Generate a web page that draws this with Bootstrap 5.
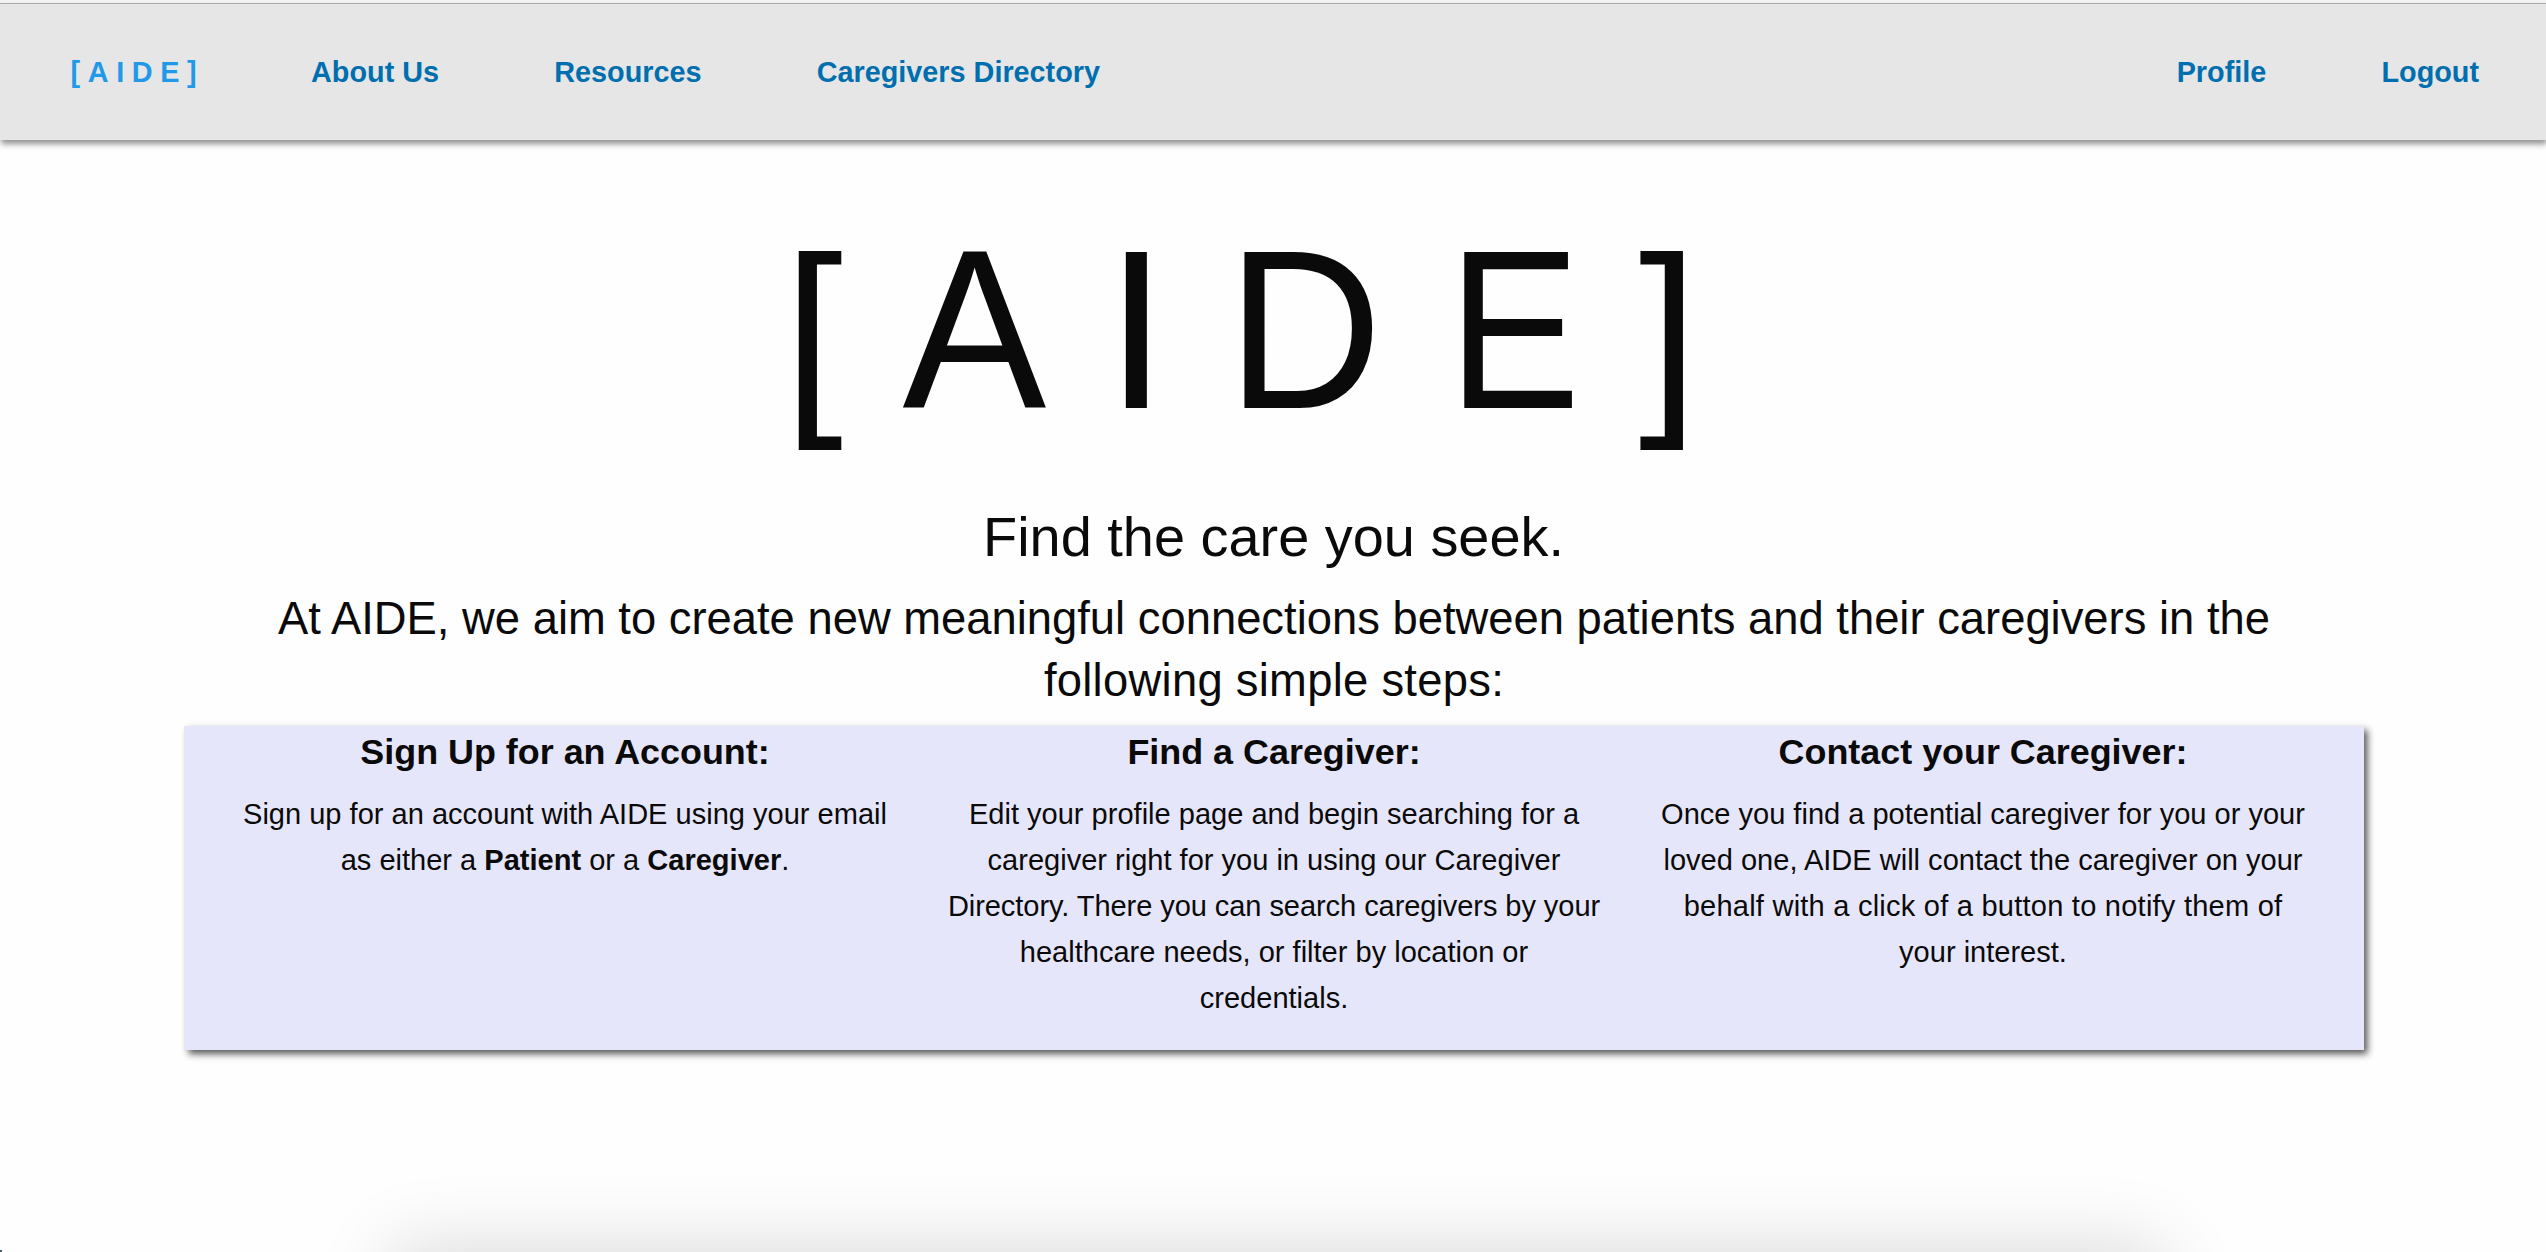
<!doctype html>
<html lang="en">
<head>
<meta charset="utf-8">
<meta name="viewport" content="width=device-width, initial-scale=1">
<title>AIDE</title>
<link href="https://cdn.jsdelivr.net/npm/bootstrap@5.3.0/dist/css/bootstrap.min.css" rel="stylesheet">
<style>
  body {
    font-family: "Liberation Sans", Arial, sans-serif;
    font-size: 29.04px;
    color: #0a0a0a;
    background: #fefefe;
    height: 1252px;
  }
  .window-edge { height: 4px; background: #f3f3f3; border-bottom: 1px solid #b0b0b0; }
  .site-nav {
    height: 136px;
    padding: 0 67px 0 70.6px;
    background: #e6e6e6;
    box-shadow: 1px 4px 6px rgba(0, 0, 0, .43);
    font-size: 28.8px;
    font-weight: 700;
    line-height: 40px;
  }
  .site-nav .nav-link { color: #006faf; padding: 0; }
  .site-nav .navbar-brand {
    color: #2199e8; font-size: inherit; letter-spacing: 7.6px; line-height: 40px;
    padding: 0; margin: 0 106.9px 0 0;
  }
  .nav-group { gap: 115.2px; }
  .hero-logo {
    font-size: 225.7px; line-height: 300px; height: 300px;
    margin-top: 40px; padding-left: 783.5px;
    font-weight: 400;
  }
  .hero-logo span { display: block; margin-right: 55.5px; }
  .hero-logo .bracket { font-size: 214px; line-height: 303px; }
  .hero-logo .open { margin-right: 56px; }
  .hero-logo .slim { transform: scaleX(.955); }
  .hero-logo .slimmer { transform: scaleX(.88); margin-left: -3px; }
  .hero-logo .close-bracket { margin-left: -6px; }
  .tagline { font-size: 55.9px; line-height: 76px; margin: 18.5px 0 13px; padding-left: 1px; font-weight: 400; }
  .intro { font-size: 45.36px; line-height: 62px; margin-bottom: 14.4px; padding-left: 2px; font-weight: 400; }
  .intro .second { letter-spacing: .28px; }
  .steps {
    width: 2180px;
    height: 324px;
    padding: 0 26.5px;
    margin-left: 184px;
    background: #e6e6fa;
    box-shadow: 3.5px 4px 7px rgba(0, 0, 0, .66);
  }
  .steps h2 { font-size: 35.9px; line-height: 50px; font-weight: 700; margin: 1px 0 14px; }
  .steps p { line-height: 46.08px; margin: 0; }
  .tight { letter-spacing: -.07px; }
  .loose { letter-spacing: .23px; }
  .next-panel {
    width: 1752px; height: 400px; margin-top: 208px; margin-left: 401px;
    box-shadow: 0 0 70px 10px rgba(0, 0, 0, .15);
    background: #fefefe;
  }
  .corner-mark { width: 2px; height: 2px; background: #3d5a63; }
</style>
</head>
<body class="overflow-hidden position-relative">
<div class="window-edge"></div>
<nav class="site-nav d-flex align-items-center justify-content-between">
  <div class="d-flex align-items-center">
    <a class="navbar-brand" href="#">[AIDE]</a>
    <div class="nav-group d-flex">
      <a class="nav-link" href="#">About Us</a>
      <a class="nav-link" href="#">Resources</a>
      <a class="nav-link" href="#">Caregivers Directory</a>
    </div>
  </div>
  <div class="nav-group d-flex">
    <a class="nav-link" href="#">Profile</a>
    <a class="nav-link" href="#">Logout</a>
  </div>
</nav>
<main class="text-center">
  <h1 class="hero-logo d-flex mb-0"><span class="bracket open">[</span><span class="slim">A</span><span>I</span><span class="slim">D</span><span class="slimmer">E</span><span class="bracket close-bracket">]</span></h1>
  <h2 class="tagline">Find the care you seek.</h2>
  <h3 class="intro">At AIDE, we aim to create new meaningful connections between patients and their caregivers in the<br><span class="second">following simple steps:</span></h3>
  <section class="steps row">
    <div class="col-4 px-0">
      <h2>Sign Up for an Account:</h2>
      <p>Sign up for an account with AIDE using your email<br>as either a <strong>Patient</strong> or a <strong>Caregiver</strong>.</p>
    </div>
    <div class="col-4 px-0">
      <h2>Find a Caregiver:</h2>
      <p>Edit your profile page and begin searching for a<br>caregiver right for you in using our Caregiver<br><span class="tight">Directory. There you can search caregivers by your</span><br>healthcare needs, or filter by location or<br>credentials.</p>
    </div>
    <div class="col-4 px-0">
      <h2>Contact your Caregiver:</h2>
      <p>Once you find a potential caregiver for you or your<br>loved one, AIDE will contact the caregiver on your<br><span class="loose">behalf with a click of a button to notify them of</span><br>your interest.</p>
    </div>
  </section>
  <div class="next-panel"></div>
</main>
<div class="corner-mark position-absolute bottom-0 start-0"></div>
<script src="https://cdn.jsdelivr.net/npm/bootstrap@5.3.0/dist/js/bootstrap.bundle.min.js"></script>
</body>
</html>
